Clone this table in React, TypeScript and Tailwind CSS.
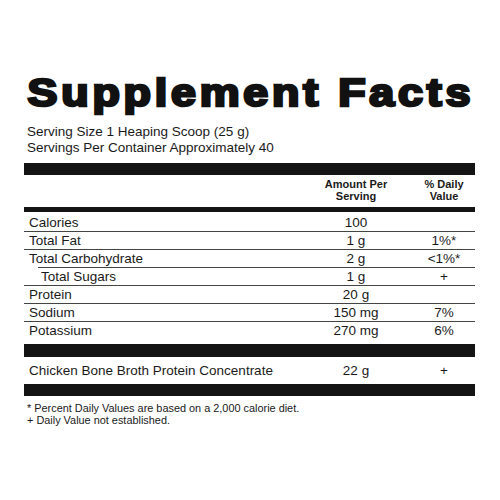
import React from 'react';

type Row = {
  label: string;
  amount: string;
  dv?: string;
  indent?: boolean;
  line?: 'full' | 'indent' | 'none';
  first?: boolean;
};

const rows: Row[] = [
  { label: 'Calories', amount: '100', line: 'full', first: true },
  { label: 'Total Fat', amount: '1 g', dv: '1%*', line: 'full' },
  { label: 'Total Carbohydrate', amount: '2 g', dv: '<1%*', line: 'indent' },
  { label: 'Total Sugars', amount: '1 g', dv: '+', indent: true, line: 'full' },
  { label: 'Protein', amount: '20 g', line: 'full' },
  { label: 'Sodium', amount: '150 mg', dv: '7%', line: 'full' },
  { label: 'Potassium', amount: '270 mg', dv: '6%', line: 'none' },
];

const cols = 'grid grid-cols-[275px_114px_62px]';

function FactRow({ row }: { row: Row }) {
  return (
    <div>
      <div className={`${cols} text-[13.5px] leading-[17px] ${row.first ? 'pt-[2px]' : ''}`}>
        <span className={row.indent ? 'pl-[17px]' : 'pl-[5px]'}>{row.label}</span>
        <span className="text-center">{row.amount}</span>
        <span className="text-center">{row.dv ?? ''}</span>
      </div>
      {row.line === 'full' && <div className="h-px bg-[#444]" />}
      {row.line === 'indent' && <div className="ml-[14px] h-px bg-[#444]" />}
    </div>
  );
}

export default function App() {
  return (
    <div className="w-[500px] h-[500px] bg-white text-[#1a1a1a] font-['Liberation_Sans',Arial,sans-serif]">
      <div className="ml-[24px] w-[451px] pt-[74px]">
        <h1 className="w-fit pl-[3px] whitespace-nowrap text-[38px] leading-[38px] font-bold tracking-[3.2px] text-[#111] [-webkit-text-stroke:2.6px_#111] origin-left scale-x-[1.18]">
          Supplement Facts
        </h1>
        <div className="mt-[12px] pl-[3px] text-[13.5px] leading-[16px]">
          <p>Serving Size 1 Heaping Scoop (25 g)</p>
          <p>Servings Per Container Approximately 40</p>
        </div>

        <div className="mt-[7px] h-[12px] bg-[#141414]" />

        <div className={`${cols} pt-[3px] text-[11px] leading-[12px] font-bold`}>
          <span />
          <span className="text-center">Amount Per<br />Serving</span>
          <span className="text-center">% Daily<br />Value</span>
        </div>

        <div className="mt-[5px] h-[5px] bg-[#141414]" />

        {rows.map((r) => (
          <FactRow key={r.label} row={r} />
        ))}

        <div className="mt-[5px] h-[13px] bg-[#141414]" />

        <div className={`${cols} pt-[5px] text-[13.5px] leading-[17px]`}>
          <span className="pl-[5px] whitespace-nowrap">Chicken Bone Broth Protein Concentrate</span>
          <span className="text-center">22 g</span>
          <span className="text-center">+</span>
        </div>

        <div className="mt-[5px] h-[12px] bg-[#141414]" />

        <div className="mt-[7px] pl-[3px] text-[10.9px] leading-[11.5px]">
          <p>* Percent Daily Values are based on a 2,000 calorie diet.</p>
          <p>+ Daily Value not established.</p>
        </div>
      </div>
    </div>
  );
}
